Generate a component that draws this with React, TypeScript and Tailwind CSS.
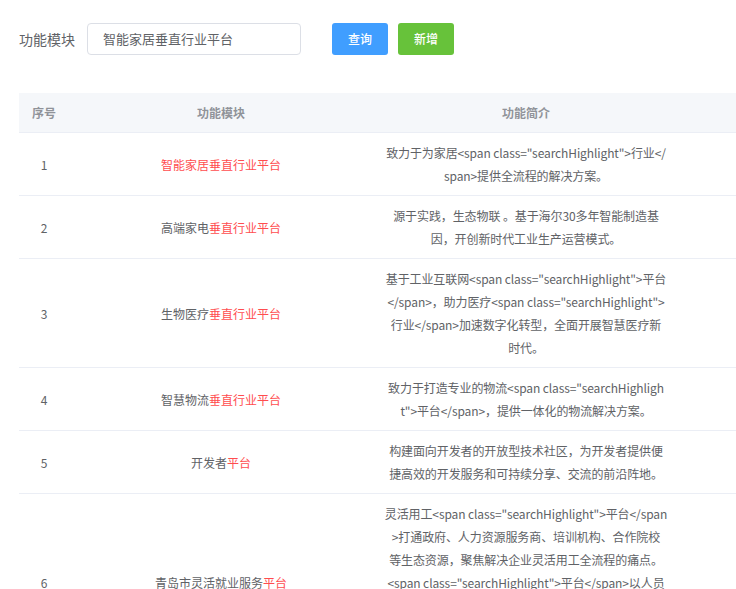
import React from "react";

const H = ({ children }: { children: React.ReactNode }) => (
  <span className="text-[#ff4d4f]">{children}</span>
);

type Row = { no: number; name: React.ReactNode; desc: string[] };

const rows: Row[] = [
  {
    no: 1,
    name: <H>智能家居垂直行业平台</H>,
    desc: ['致力于为家居<span class="searchHighlight">行业</', "span>提供全流程的解决方案。"],
  },
  {
    no: 2,
    name: (
      <>
        高端家电<H>垂直行业平台</H>
      </>
    ),
    desc: ["源于实践，生态物联 。基于海尔30多年智能制造基", "因，开创新时代工业生产运营模式。"],
  },
  {
    no: 3,
    name: (
      <>
        生物医疗<H>垂直行业平台</H>
      </>
    ),
    desc: [
      '基于工业互联网<span class="searchHighlight">平台',
      '</span>，助力医疗<span class="searchHighlight">',
      "行业</span>加速数字化转型，全面开展智慧医疗新",
      "时代。",
    ],
  },
  {
    no: 4,
    name: (
      <>
        智慧物流<H>垂直行业平台</H>
      </>
    ),
    desc: ['致力于打造专业的物流<span class="searchHighligh', 't">平台</span>，提供一体化的物流解决方案。'],
  },
  {
    no: 5,
    name: (
      <>
        开发者<H>平台</H>
      </>
    ),
    desc: ["构建面向开发者的开放型技术社区，为开发者提供便", "捷高效的开发服务和可持续分享、交流的前沿阵地。"],
  },
  {
    no: 6,
    name: (
      <>
        青岛市灵活就业服务<H>平台</H>
      </>
    ),
    desc: [
      '灵活用工<span class="searchHighlight">平台</span',
      ">打通政府、人力资源服务商、培训机构、合作院校",
      "等生态资源，聚焦解决企业灵活用工全流程的痛点。",
      '<span class="searchHighlight">平台</span>以人员',
      "为核心，提供招聘、培训、用工管理、薪酬结算、",
      "保险保障等一站式服务，助力企业降本增效，促进",
      "灵活就业人员高质量就业。",
    ],
  },
];

export default function App() {
  return (
    <div
      className="w-[736px] h-[589px] overflow-hidden bg-white text-[#606266]"
      style={{ fontFamily: '"Noto Sans CJK SC", "Noto Sans", sans-serif' }}
    >
      <div className="pl-[19px] pt-[23px]">
        <div className="flex items-center h-[32px]">
          <label className="text-[14px] pr-[12px] leading-[32px] whitespace-nowrap">功能模块</label>
          <div className="w-[214px] h-[32px] border border-[#dcdfe6] rounded-[4px] px-[15px] flex items-center text-[13px] text-[#606266] whitespace-nowrap">
            智能家居垂直行业平台
          </div>
          <button className="ml-[31px] h-[32px] w-[56px] rounded-[3px] bg-[#409eff] text-white text-[12px] font-medium">
            查询
          </button>
          <button className="ml-[10px] h-[32px] w-[56px] rounded-[3px] bg-[#67c23a] text-white text-[12px] font-medium">
            新增
          </button>
        </div>

        <table className="mt-[38px] table-fixed border-collapse w-[900px] text-[12px]">
          <colgroup>
            <col className="w-[50px]" />
            <col className="w-[304px]" />
            <col className="w-[306px]" />
            <col className="w-[240px]" />
          </colgroup>
          <thead>
            <tr className="bg-[#f5f7fa] border-b border-[#ebeef5]">
              <th className="py-[8px] px-[10px] leading-[23px] font-semibold text-[#909399] text-center">序号</th>
              <th className="py-[8px] px-[10px] leading-[23px] font-semibold text-[#909399] text-center">功能模块</th>
              <th className="py-[8px] px-[10px] leading-[23px] font-semibold text-[#909399] text-center">功能简介</th>
              <th className="py-[8px] px-[10px] leading-[23px]"></th>
            </tr>
          </thead>
          <tbody>
            {rows.map((r) => (
              <tr key={r.no} className="border-b border-[#ebeef5]">
                <td className="py-[8px] px-[10px] leading-[23px] text-center align-middle">{r.no}</td>
                <td className="py-[8px] px-[10px] leading-[23px] text-center align-middle whitespace-nowrap">
                  {r.name}
                </td>
                <td className="py-[8px] px-[10px] leading-[23px] text-center align-middle whitespace-nowrap tracking-[-0.1px]">
                  {r.desc.map((l, i) => (
                    <div key={i}>{l}</div>
                  ))}
                </td>
                <td className="py-[8px] px-[10px] leading-[23px]"></td>
              </tr>
            ))}
          </tbody>
        </table>
      </div>
    </div>
  );
}
